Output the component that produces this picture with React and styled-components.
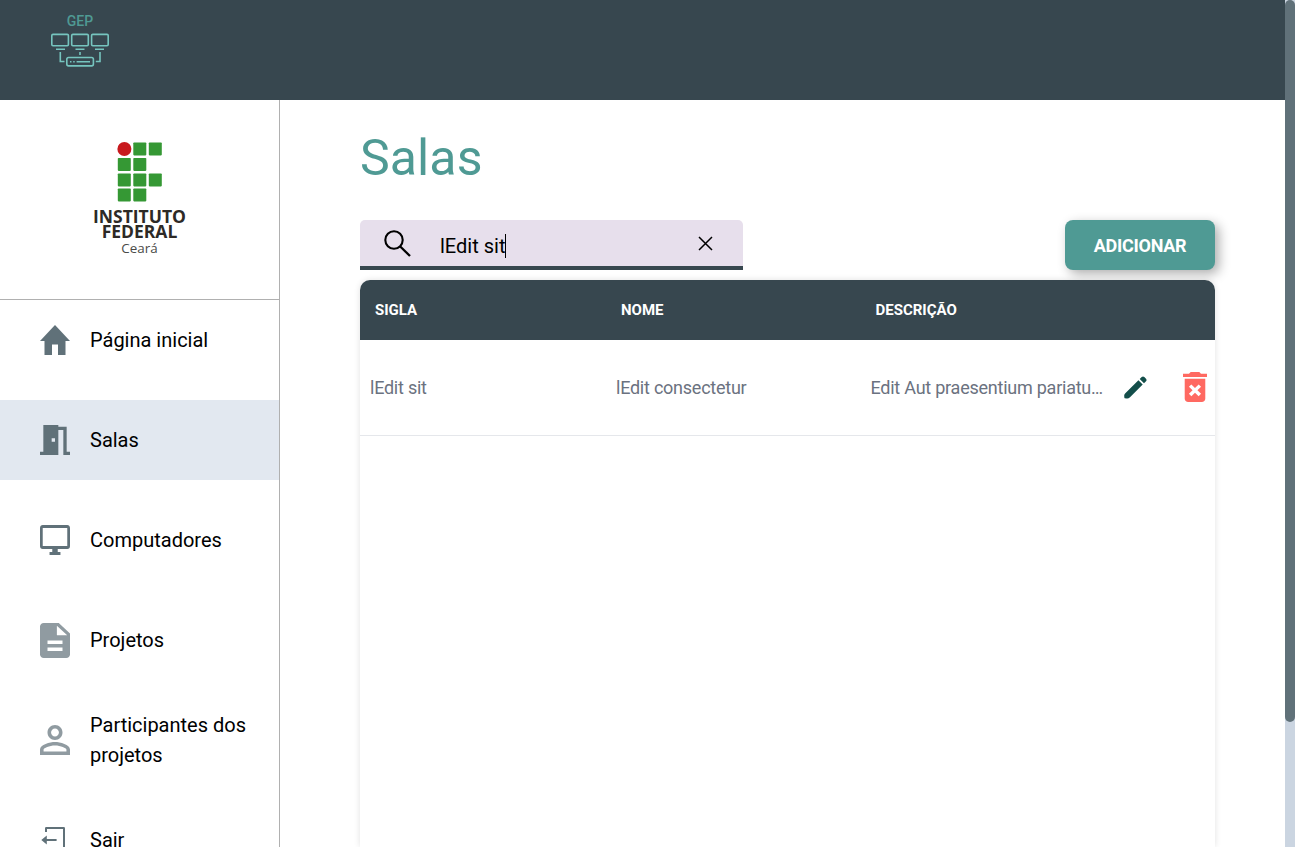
import React from "react";
import styled, { createGlobalStyle } from "styled-components";

const GlobalStyle = createGlobalStyle`
  *, *::before, *::after { box-sizing: border-box; }
  body { margin: 0; overflow: hidden; background: #fff; font-family: Roboto, "Liberation Sans", sans-serif; }
  h1, p { margin: 0; }
`;

const Window = styled.div`
  display: flex;
  width: 100%;
  height: 100vh;
  overflow: hidden;
`;
const Page = styled.div`
  flex: 1;
  min-width: 0;
  display: flex;
  flex-direction: column;
`;
const ScrollTrack = styled.div`
  width: 10px;
  background: #cbd5e1;
`;
const ScrollThumb = styled.div`
  height: 722px;
  border-radius: 5px;
  background: #607179;
`;
const Header = styled.header`
  height: 100px;
  flex: none;
  background: #37474f;
  padding: 10px 0 0 50px;
`;
const Brand = styled.div`
  width: 60px;
  display: flex;
  flex-direction: column;
  align-items: center;
  color: #4f9a94;
  font-size: 14px;
  font-weight: 500;
  line-height: 22px;
`;
const Body = styled.div`
  flex: 1;
  min-height: 0;
  display: flex;
`;
const Sidebar = styled.aside`
  width: 280px;
  flex: none;
  border-right: 1px solid #b0b0b0;
  overflow: hidden;
`;
const Campus = styled.div`
  height: 200px;
  border-bottom: 1px solid #b0b0b0;
  padding-top: 42px;
  display: flex;
  flex-direction: column;
  align-items: center;
`;
const CampusName = styled.p`
  margin-top: 7px;
  font: 700 17.5px/15px "Open Sans", sans-serif;
  text-align: center;
  color: #2d2a26;
  & + & { margin-top: 0; }
`;
const CampusCity = styled.p`
  margin-top: 1px;
  font: 400 13.4px/17px "Open Sans", sans-serif;
  color: #4a4a48;
`;
const Menu = styled.nav`
  display: flex;
  flex-direction: column;
  gap: 20px;
`;
const MenuItem = styled.a`
  height: 80px;
  flex: none;
  display: flex;
  align-items: center;
  gap: 20px;
  padding: 0 30px 0 40px;
  background: ${(p) => (p.$active ? "#e2e8f0" : "transparent")};
  color: #000;
  font-size: 20px;
  line-height: 30px;
`;
const Icon = styled.svg`
  display: block;
  flex: none;
  fill: currentColor;
  color: ${(p) => p.$color || "#000"};
`;
const Main = styled.main`
  flex: 1;
  min-width: 0;
  padding: 20px 70px 0 80px;
  display: flex;
  flex-direction: column;
`;
const Title = styled.h1`
  height: 100px;
  padding-top: 1px;
  font-size: 50px;
  line-height: 75px;
  font-weight: 400;
  letter-spacing: 0.1px;
  color: #4f9a94;
`;
const Toolbar = styled.div`
  display: flex;
  justify-content: space-between;
  align-items: flex-start;
  height: 60px;
  flex: none;
`;
const Search = styled.div`
  width: 383px;
  height: 50px;
  display: flex;
  align-items: center;
  padding: 0 30px 0 24px;
  background: #e7dfec;
  border-bottom: 4px solid #37474f;
  border-radius: 5px 5px 0 0;
`;
const Query = styled.div`
  flex: 1;
  display: flex;
  align-items: center;
  margin: 5px 0 0 29px;
  font-size: 20px;
  line-height: 24px;
  color: #000;
`;
const Caret = styled.span`
  width: 1px;
  height: 24px;
  background: #000;
`;
const AddButton = styled.button`
  width: 150px;
  height: 50px;
  padding: 0;
  border: 0;
  border-radius: 8px;
  background: #4f9a94;
  color: #fff;
  font: 700 18px Roboto, sans-serif;
  letter-spacing: -0.25px;
  box-shadow: 4px 4px 12px rgba(0, 0, 0, 0.32);
`;
const Table = styled.section`
  flex: 1;
  border-radius: 10px 10px 0 0;
  box-shadow: 0 0 6px rgba(0, 0, 0, 0.12);
`;
const Row = styled.div`
  display: grid;
  grid-template-columns: 246px 254.5px 1fr;
  align-items: center;
`;
const HeadRow = styled(Row)`
  height: 60px;
  padding: 0 15px;
  border-radius: 10px 10px 0 0;
  background: #37474f;
  color: #fff;
  font-size: 15px;
  font-weight: 700;
`;
const DataRow = styled(Row)`
  height: 96px;
  padding: 0 8px 0 10px;
  border-bottom: 1px solid #e5e7eb;
  color: #6b7280;
  font-size: 18px;
  letter-spacing: -0.24px;
`;
const LastCell = styled.div`
  display: flex;
  align-items: center;
`;
const Description = styled.span`
  width: 234px;
  margin-right: 19px;
  white-space: nowrap;
`;
const Actions = styled.div`
  flex: 1;
  display: flex;
  align-items: center;
  justify-content: space-between;
  padding-bottom: 1px;
`;

const items = [
  { label: "Página inicial", box: "2 3 20 17", h: 30, color: "#607179", d: "M10 20v-6h4v6h5v-8h3L12 3 2 12h3v8z" },
  { label: "Salas", box: "3 3 18 18", h: 30, color: "#607179", active: true, d: "M14 6v15H3v-2h2V3h9v1h5v15h2v2h-4V6h-3zm-4 5v2h2v-2h-2z" },
  { label: "Computadores", box: "1 2 22 20", h: 30, color: "#607179", d: "M21 16H3V4h18m0-2H3c-1.11 0-2 .89-2 2v12a2 2 0 0 0 2 2h7v2H8v2h8v-2h-2v-2h7a2 2 0 0 0 2-2V4c0-1.11-.9-2-2-2z" },
  { label: "Projetos", box: "4 2 16 20", h: 35, color: "#909ba1", d: "M14 2H6c-1.1 0-2 .9-2 2v16c0 1.1.9 2 2 2h12c1.1 0 2-.9 2-2V8l-6-6zm2 16H8v-2h8v2zm0-4H8v-2h8v2zm-3-5V3.5L18.5 9H13z" },
  { label: "Participantes dos projetos", box: "4 4 16 16", h: 30, color: "#909ba1", d: "M12 5.9c1.16 0 2.1.94 2.1 2.1s-.94 2.1-2.1 2.1S9.9 9.16 9.9 8s.94-2.1 2.1-2.1m0 9c2.97 0 6.1 1.46 6.1 2.1v1.1H5.9V17c0-.64 3.13-2.1 6.1-2.1M12 4C9.79 4 8 5.79 8 8s1.79 4 4 4 4-1.79 4-4-1.79-4-4-4zm0 9c-2.67 0-8 1.34-8 4v3h16v-3c0-2.66-5.33-4-8-4z" },
  { label: "Sair", box: "0 0 30 30", h: 30, color: "#607179", d: "M5 7V3.2q0-1.2 1.2-1.2H23.800q1.200 0 1.200 1.200V26.800q0 1.200-1.200 1.200H6.200Q5 28 5 26.800V23h2v3h16V4H7V7zM1.300 15 6.800 10.500V14h9.800v2.100H6.800v3.400z" },
];

const squares = [[15.5, 0], [31, 0], [0, 15.5], [15.5, 15.5], [0, 31], [15.5, 31], [31, 31], [0, 46], [15.5, 46]];

export default function App() {
  return (
    <Window>
      <GlobalStyle />
      <Page>
        <Header>
          <Brand>
            <span>GEP</span>
            <svg width="60" height="36" viewBox="0 0 60 36" fill="none" stroke="#76c5bf" strokeWidth="1.6">
              <rect x="1.8" y="2.4" width="16.6" height="11.4" rx="1.2" />
              <rect x="21.7" y="2.4" width="16.6" height="11.4" rx="1.2" />
              <rect x="41.6" y="2.4" width="16.6" height="11.4" rx="1.2" />
              <path d="M6 17.2h9M25.500 17.200h9M45 17.200h9M10.300 20v9.500h4.200M50 20v9.500h-4.200M30 20v3" />
              <rect x="16.800" y="25.500" width="26.600" height="8.400" rx="1.800" />
              <path d="M20 29.700h1.500M23.200 29.700h1.500M26.600 29.700H40" />
            </svg>
          </Brand>
        </Header>
        <Body>
          <Sidebar>
            <Campus>
              <svg width="45" height="60" viewBox="0 0 45 60">
                <circle cx="7.400" cy="7" r="7" fill="#c8191e" />
                {squares.map(([x, y]) => (
                  <rect key={`${x}-${y}`} x={x + 0.8} y={y + 0.4} width="13" height="13" rx="0.8" fill="#359834" />
                ))}
              </svg>
              <CampusName>INSTITUTO</CampusName>
              <CampusName>FEDERAL</CampusName>
              <CampusCity>Ceará</CampusCity>
            </Campus>
            <Menu>
              {items.map((i) => (
                <MenuItem key={i.label} $active={i.active}>
                  <Icon width="30" height={i.h} viewBox={i.box} preserveAspectRatio="none" $color={i.color}>
                    <path fillRule="evenodd" d={i.d} />
                  </Icon>
                  {i.label}
                </MenuItem>
              ))}
            </Menu>
          </Sidebar>
          <Main>
            <Title>Salas</Title>
            <Toolbar>
              <Search>
                <svg width="27" height="27" viewBox="0 0 27 27" fill="none" stroke="#000" strokeWidth="2.100">
                  <circle cx="10" cy="10" r="8.700" />
                  <path d="M16 16.200 26 26" strokeWidth="2.300" />
                </svg>
                <Query>lEdit sit<Caret /></Query>
                <svg width="15" height="16" viewBox="0 0 15 16" stroke="#000" strokeWidth="1.500">
                  <path d="m1 2 13 13M14 2l-13 13" />
                </svg>
              </Search>
              <AddButton>ADICIONAR</AddButton>
            </Toolbar>
            <Table>
              <HeadRow>
                <span>SIGLA</span>
                <span>NOME</span>
                <span>DESCRIÇÃO</span>
              </HeadRow>
              <DataRow>
                <span>lEdit sit</span>
                <span>lEdit consectetur</span>
                <LastCell>
                  <Description>Edit Aut praesentium pariatu…</Description>
                  <Actions>
                    <Icon width="23" height="23" viewBox="0 0 23 23" $color="#134e4a">
                      <path d="M14.400 4.300 18.700 8.600 6 21.300Q4.300 22.900 2.500 22.500L.7 22.200Q.3 22 .3 21.300L.2 19.500Q.2 18.500 1.100 17.600zM15.700 3 17.700 1Q19 0 20.300 1L22 2.700Q23.100 4 22 5.300L20 7.300z" />
                    </Icon>
                    <Icon width="24" height="30" viewBox="5 3 14 18" preserveAspectRatio="none" $color="#ff6961">
                      <path d="M6 19c0 1.100.9 2 2 2h8c1.100 0 2-.9 2-2V7H6v12zm2.460-7.120l1.410-1.410L12 12.590l2.120-2.120 1.410 1.410L13.410 14l2.120 2.120-1.410 1.410L12 15.410l-2.120 2.120-1.410-1.410L10.590 14l-2.130-2.120zM15.500 4l-1-1h-5l-1 1H5v2h14V4z" />
                    </Icon>
                  </Actions>
                </LastCell>
              </DataRow>
            </Table>
          </Main>
        </Body>
      </Page>
      <ScrollTrack>
        <ScrollThumb />
      </ScrollTrack>
    </Window>
  );
}
